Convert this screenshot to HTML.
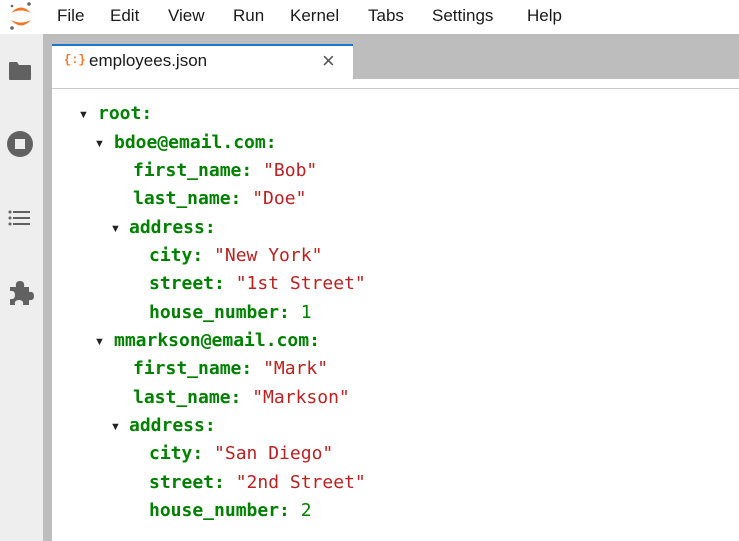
<!DOCTYPE html>
<html><head><style>
body{margin:0;width:739px;height:541px;overflow:hidden;background:#fff;font-family:"Liberation Sans",sans-serif;position:relative}
.menu{position:absolute;left:0;top:0;width:739px;height:34px;background:#fff}
.menu span{position:absolute;top:6px;font-size:17px;color:#1a1a1a}
.side{position:absolute;left:0;top:34px;width:43px;height:507px;background:#eeeeee}
.strip{position:absolute;left:43px;top:34px;width:9px;height:507px;background:#bdbdbd}
.tabbar{position:absolute;left:52px;top:34px;width:687px;height:45px;background:#bdbdbd}
.tab{position:absolute;left:52px;top:44px;width:301px;height:45px;background:#fff;border-top:2px solid #1976d2;box-sizing:border-box}
.line{position:absolute;left:52px;top:88px;width:687px;height:1px;background:#ccc}
.l{position:absolute;font-family:"DejaVu Sans Mono",monospace;font-size:18px;white-space:pre;line-height:20px}
.k{color:#008000;font-weight:bold}.s{color:#ba2121}.n{color:#008000}
.a{position:absolute;font-size:11px;color:#222}
</style></head><body>
<div class="menu">
<svg style="position:absolute;left:8px;top:1px" width="26" height="30" viewBox="0 0 26 30"><path d="M3 12 Q13 1 23 12 Q13 7 3 12Z" fill="#f37726"/><path d="M3 19 Q13 30 23 19 Q13 24 3 19Z" fill="#f37726"/><circle cx="21" cy="3" r="1.8" fill="#666"/><circle cx="4" cy="5" r="1.3" fill="#666"/><circle cx="4" cy="27" r="1.8" fill="#666"/></svg>
<span style="left:57px">File</span><span style="left:110px">Edit</span><span style="left:168px">View</span><span style="left:233px">Run</span><span style="left:290px">Kernel</span><span style="left:368px">Tabs</span><span style="left:432px">Settings</span><span style="left:527px">Help</span>
</div>
<div class="side">
<svg style="position:absolute;left:8px;top:27px" width="24" height="20"><path d="M1 2 Q1 1 2 1 H9 L11 4 H22 Q23 4 23 5 V18 Q23 19 22 19 H2 Q1 19 1 18Z" fill="#616161"/></svg>
<svg style="position:absolute;left:7px;top:97px" width="28" height="28"><circle cx="13" cy="13" r="13" fill="#616161"/><rect x="8" y="8" width="10" height="10" fill="#eee"/></svg>
<svg style="position:absolute;left:8px;top:176px" width="24" height="18"><g fill="#616161"><circle cx="2" cy="2" r="1.5"/><circle cx="2" cy="8" r="1.5"/><circle cx="2" cy="14" r="1.5"/><rect x="5" y="1" width="17" height="2"/><rect x="5" y="7" width="17" height="2"/><rect x="5" y="13" width="17" height="2"/></g></svg>
<svg style="position:absolute;left:7px;top:246px" width="28" height="26"><path d="M3 7 H9 Q8 1 13 1 Q18 1 17 7 H22 V12 Q27 11 27 16 Q27 21 22 20 V25 H16 Q17 20 12 20 Q7 20 8 25 H3 V19 Q8 20 8 15 Q8 10 3 11Z" fill="#616161"/></svg>
</div>
<div class="strip"></div>
<div class="tabbar"></div>
<div class="tab">
<span style="position:absolute;left:12px;top:7px;font-size:12px;color:#f37726;font-weight:bold;font-family:'Liberation Mono',monospace">{:}</span>
<span style="position:absolute;left:37px;top:5px;font-size:17px;color:#1a1a1a">employees.json</span>
<span style="position:absolute;left:270px;top:2px;font-size:22px;color:#555">×</span>
</div>
<div class="line"></div>
<span class="a" style="left:78px;top:109px">▼</span><div class="l" style="left:98px;top:104px"><span class="k">root:</span></div>
<span class="a" style="left:94px;top:138px">▼</span><div class="l" style="left:114px;top:133px"><span class="k">bdoe@email.com:</span></div>
<div class="l" style="left:133px;top:161px"><span class="k">first_name:</span> <span class="s">"Bob"</span></div>
<div class="l" style="left:133px;top:189px"><span class="k">last_name:</span> <span class="s">"Doe"</span></div>
<span class="a" style="left:110px;top:223px">▼</span><div class="l" style="left:129px;top:218px"><span class="k">address:</span></div>
<div class="l" style="left:149px;top:246px"><span class="k">city:</span> <span class="s">"New York"</span></div>
<div class="l" style="left:149px;top:274px"><span class="k">street:</span> <span class="s">"1st Street"</span></div>
<div class="l" style="left:149px;top:303px"><span class="k">house_number:</span> <span class="n">1</span></div>
<span class="a" style="left:94px;top:336px">▼</span><div class="l" style="left:114px;top:331px"><span class="k">mmarkson@email.com:</span></div>
<div class="l" style="left:133px;top:359px"><span class="k">first_name:</span> <span class="s">"Mark"</span></div>
<div class="l" style="left:133px;top:388px"><span class="k">last_name:</span> <span class="s">"Markson"</span></div>
<span class="a" style="left:110px;top:421px">▼</span><div class="l" style="left:129px;top:416px"><span class="k">address:</span></div>
<div class="l" style="left:149px;top:444px"><span class="k">city:</span> <span class="s">"San Diego"</span></div>
<div class="l" style="left:149px;top:473px"><span class="k">street:</span> <span class="s">"2nd Street"</span></div>
<div class="l" style="left:149px;top:501px"><span class="k">house_number:</span> <span class="n">2</span></div>
</body></html>
